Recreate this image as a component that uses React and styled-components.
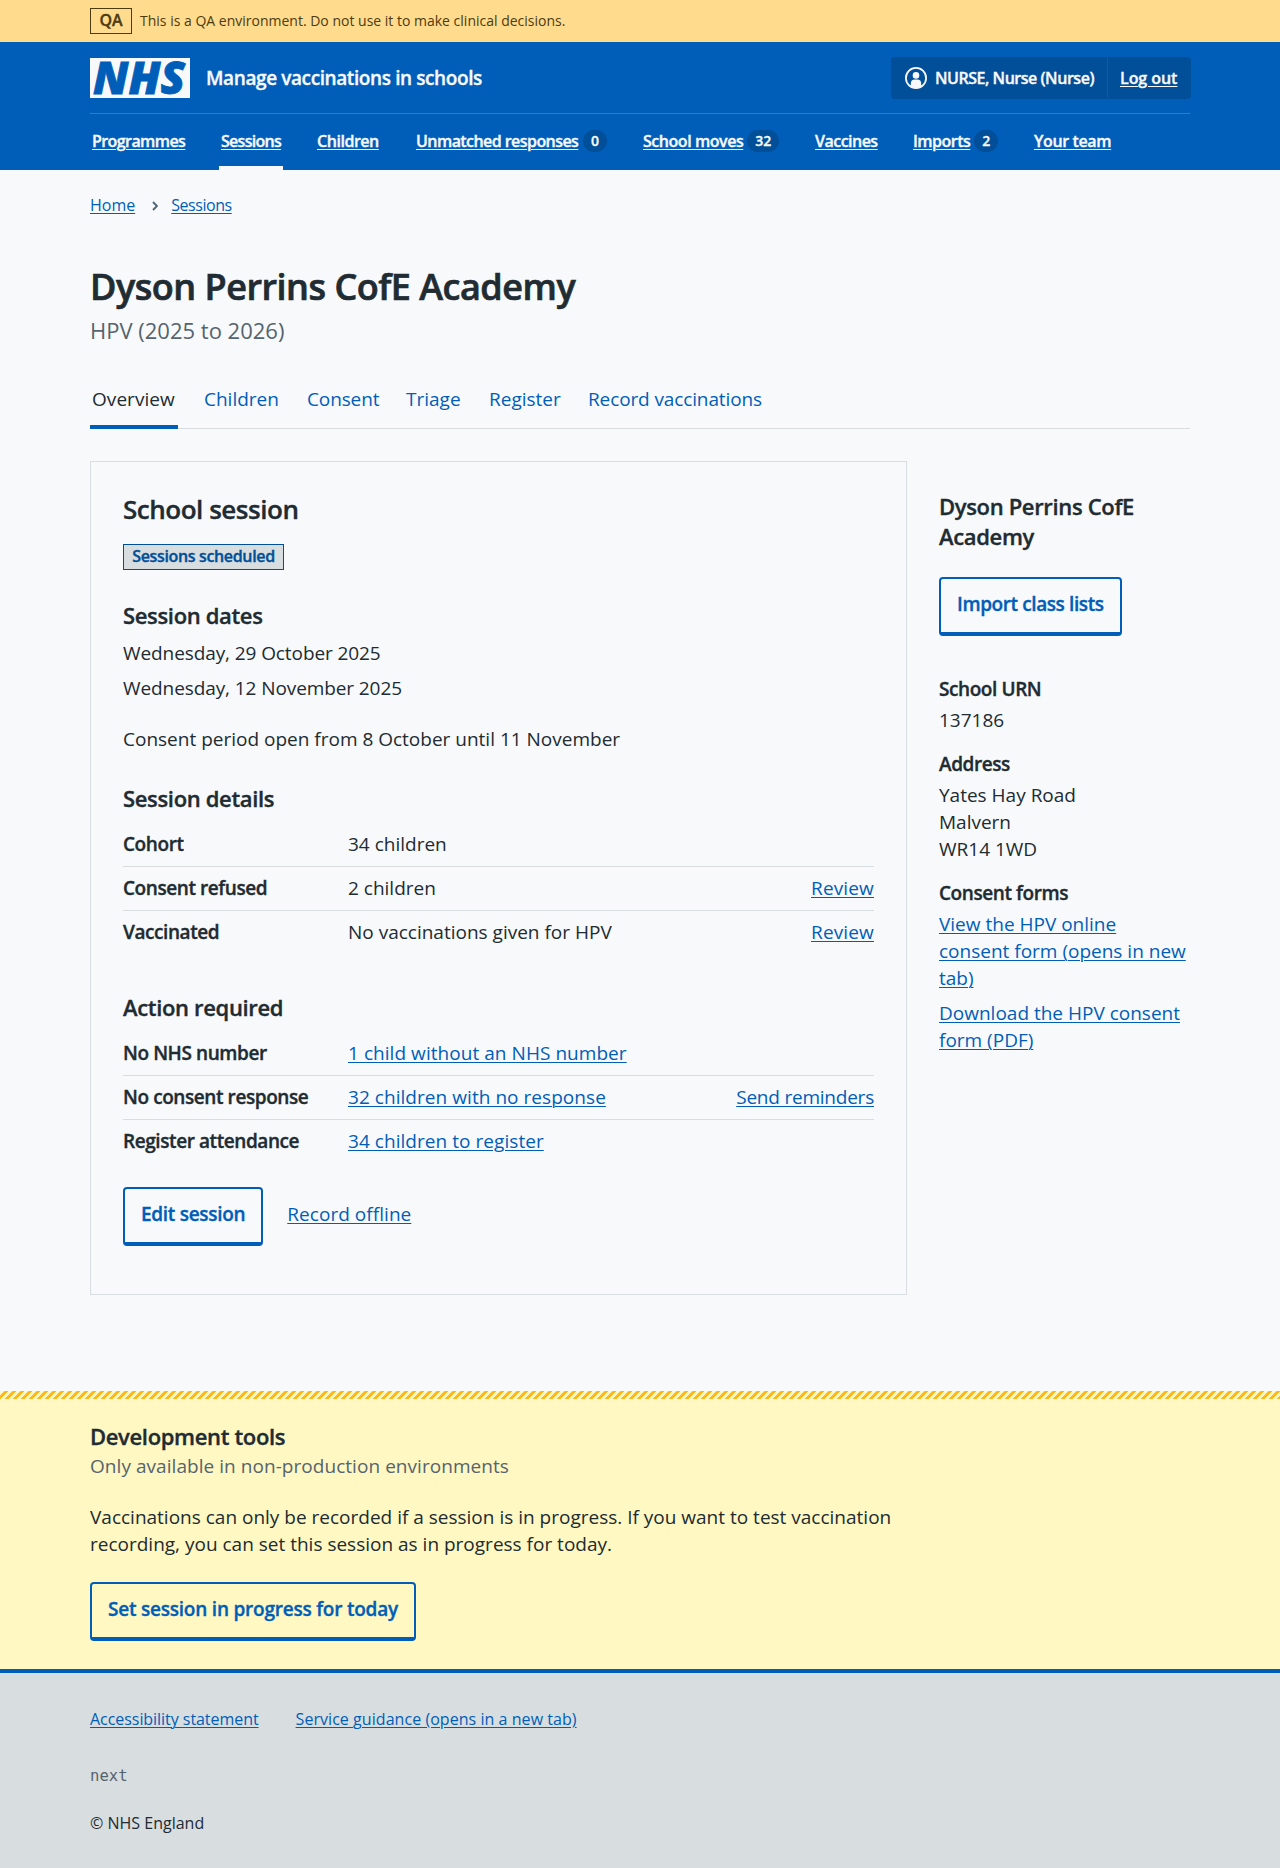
import React from "react";
import styled, { createGlobalStyle, css } from "styled-components";

const color = {
  blue: "#005eb8",
  darkBlue: "#004f98",
  page: "#f8f9fb",
  text: "#212b32",
  secondary: "#56646e",
  line: "#d8dde0",
};

const Global = createGlobalStyle`
  * { box-sizing: border-box; }
  body {
    margin: 0;
    background: ${color.line};
    color: ${color.text};
    font: 400 19px/27px "Open Sans", "Noto Sans", sans-serif;
  }
  h1, h2, h3, p, ul, dl, dd { margin: 0; padding: 0; }
  ul { list-style: none; }
`;

const semibold = css`
  font-weight: 600;
  -webkit-text-stroke: 0.35px currentColor;
`;

const Container = styled.div`
  width: 1100px;
  margin: 0 auto;
`;

const Link = styled.a`
  color: ${color.blue};
  letter-spacing: ${(p) => p.$spacing || 0}px;
  text-decoration: underline;
  text-decoration-thickness: 1.4px;
  text-underline-offset: 2px;
`;

/* Environment banner */
const Banner = styled.div`
  height: 42px;
  background: #ffdb8d;
  color: #4d3c10;
  font-size: 14px;
`;
const BannerRow = styled(Container)`
  display: flex;
  align-items: center;
  gap: 8px;
  height: 42px;
`;
const BannerText = styled.span`
  padding-bottom: 1px;
`;
const EnvTag = styled.strong`
  ${semibold}
  width: 42px;
  height: 26px;
  border: 1px solid #4d3c10;
  font-size: 16px;
  line-height: 23px;
  text-align: center;
`;

/* Header */
const Header = styled.header`
  height: 128px;
  background: ${color.blue};
  color: ${color.page};
`;
const HeaderTop = styled(Container)`
  display: flex;
  align-items: center;
  height: 72px;
  border-bottom: 1px solid #2f7ac5;
`;
const ServiceName = styled.span`
  ${semibold}
  margin-left: 16px;
  padding-top: 1px;
  letter-spacing: -0.4px;
`;
const Account = styled.div`
  ${semibold}
  display: flex;
  width: 300px;
  height: 42px;
  margin: 0 -1px 0 auto;
  padding: 1px 0;
  border-radius: 4px;
  background: ${color.darkBlue};
  font-size: 16px;
  line-height: 40px;
`;
const AccountUser = styled.span`
  display: flex;
  align-items: center;
  gap: 8px;
  width: 217px;
  padding-left: 14px;
  border-right: 1px solid ${color.blue};
  letter-spacing: -0.47px;
`;
const AccountLink = styled.a`
  margin-left: 12px;
  letter-spacing: -0.05px;
  text-decoration: underline;
  text-decoration-thickness: 1px;
  text-underline-offset: 2px;
`;
const Nav = styled(Container)`
  display: flex;
  gap: 32px;
  height: 56px;
`;
const NavItem = styled.a`
  ${semibold}
  display: flex;
  align-items: center;
  gap: 4px;
  flex: none;
  width: ${(p) => p.$width}px;
  padding: 0 2px 2px;
  font-size: 16px;
  line-height: 24px;
  letter-spacing: ${(p) => p.$spacing}px;
  white-space: nowrap;
  ${(p) => p.$active && css`box-shadow: inset 0 -4px ${color.page};`}
`;
const NavText = styled.span`
  text-decoration: underline;
  text-decoration-thickness: 1px;
  text-underline-offset: 2px;
`;
const Count = styled.span`
  min-width: 24px;
  height: 22px;
  margin-left: auto;
  padding: 0 8px;
  border-radius: 11px;
  background: ${color.darkBlue};
  font-size: 14px;
  line-height: 22px;
  letter-spacing: 0;
  text-align: center;
`;

/* Page heading */
const Main = styled.main`
  height: 1221px;
  padding-top: 23px;
  background: ${color.page};
`;
const Breadcrumb = styled.nav`
  display: flex;
  align-items: center;
  height: 24px;
  font-size: 16px;
  line-height: 24px;
`;
const Chevron = styled.svg`
  margin: 1px 13px 0 17px;
`;
const Title = styled.h1`
  ${semibold}
  -webkit-text-stroke-width: 0.7px;
  margin-top: 48px;
  font-size: 36px;
  line-height: 44px;
  letter-spacing: -0.48px;
`;
const Caption = styled.p`
  margin-top: 6px;
  color: ${color.secondary};
  font-size: 22px;
  line-height: 30px;
`;
const Tabs = styled.nav`
  display: flex;
  gap: 24px;
  height: 44px;
  margin-top: 40px;
  box-shadow: inset 0 -1px ${color.line};
`;
const Tab = styled.a`
  width: ${(p) => p.$width}px;
  padding: 1px 2px 0;
  letter-spacing: ${(p) => p.$spacing || 0}px;
  white-space: nowrap;
  color: ${(p) => (p.$active ? color.text : color.blue)};
  ${(p) => p.$active && css`box-shadow: inset 0 -4px ${color.blue};`}
`;

/* Columns */
const Columns = styled.div`
  display: grid;
  grid-template-columns: 817px 251px;
  gap: 32px;
  align-items: start;
  margin-top: 32px;
`;
const Card = styled.section`
  height: 834px;
  padding: 32px;
  border: 1px solid ${color.line};
`;
const CardTitle = styled.h2`
  ${semibold}
  font-size: 26px;
  line-height: 30px;
  letter-spacing: -0.47px;
`;
const Status = styled.strong`
  ${semibold}
  display: block;
  width: 161px;
  height: 26px;
  margin-top: 20px;
  border: 1px solid ${color.darkBlue};
  background: ${color.line};
  color: ${color.darkBlue};
  font-size: 16px;
  line-height: 23px;
  letter-spacing: -0.35px;
  text-align: center;
`;
const Heading = styled.h3`
  ${semibold}
  margin-top: ${(p) => p.$top}px;
  font-size: 22px;
  line-height: 30px;
  letter-spacing: -0.34px;
`;
const Dates = styled.ul`
  display: grid;
  gap: 8px;
  margin-top: 10px;
  letter-spacing: -0.09px;
`;
const Paragraph = styled.p`
  margin-top: 24px;
  max-width: 817px;
`;
const Summary = styled.dl`
  margin-top: 10px;
`;
const SummaryRow = styled.div`
  display: grid;
  grid-template-columns: 225px 1fr auto;
  height: 44px;
  padding-top: 8px;
  border-bottom: 1px solid ${color.line};
  &:last-child { border-color: transparent; }
`;
const Key = styled.dt`
  ${semibold}
  letter-spacing: -0.42px;
`;
const Actions = styled.div`
  display: flex;
  align-items: flex-start;
  gap: 24px;
  margin-top: 23px;
  > a { padding-top: 14px; }
`;
const Button = styled.button`
  display: block;
  height: 59px;
  margin-top: ${(p) => p.$top || 0}px;
  padding: 12px 16px 14px;
  border: 2px solid ${color.blue};
  border-bottom-width: 4px;
  border-radius: 4px;
  background: transparent;
  color: ${color.blue};
  font: inherit;
  ${semibold}
  letter-spacing: ${(p) => p.$spacing || -0.22}px;
  white-space: nowrap;
`;

/* School details */
const Details = styled.dl`
  display: grid;
  gap: 17px;
  margin-top: 40px;
`;
const Detail = styled.div`
  display: grid;
  gap: 4px;
`;
const LinkList = styled.ul`
  display: grid;
  gap: 8px;
`;

/* Development tools */
const DevTools = styled.section`
  height: 278px;
  background: #fff8c2;
`;
const Stripe = styled.div`
  height: 8px;
  background: linear-gradient(
      135deg,
      transparent 25%,
      #ffb81c 25% 50%,
      transparent 50% 75%,
      #ffb81c 75%
    )
    0 0 / 8px 8px;
`;
const DevCaption = styled.p`
  margin-top: 2px;
  color: ${color.secondary};
  letter-spacing: 0.05px;
`;

/* Footer */
const Footer = styled.footer`
  height: 199px;
  padding-top: 34px;
  border-top: 4px solid ${color.blue};
  background: ${color.line};
  font-size: 16px;
  line-height: 24px;
`;
const FooterLinks = styled.div`
  display: flex;
  gap: 37px;
`;
const Version = styled.p`
  margin-top: 33px;
  color: ${color.secondary};
  font: 15.6px/24px "DejaVu Sans Mono", monospace;
`;
const Copyright = styled.p`
  margin-top: 23px;
`;

const LogoSvg = styled.svg`
  flex: none;
  overflow: visible;
`;
const LogoText = styled.text`
  fill: ${color.blue};
  stroke: ${color.blue};
  stroke-width: 0.8px;
  font: italic 800 45px "Open Sans", sans-serif;
`;

const Logo = () => (
  <LogoSvg width="100" height="40" viewBox="0 0 100 40" role="img" aria-label="NHS">
    <rect width="100" height="40" fill={color.page} />
    <LogoText x="3" y="36" textLength="92" lengthAdjust="spacingAndGlyphs">NHS</LogoText>
  </LogoSvg>
);

const UserIcon = () => (
  <svg width="22" height="22" viewBox="0 0 22 22" aria-hidden="true">
    <circle cx="11" cy="11" r="10.1" fill="none" stroke={color.page} strokeWidth="1.8" />
    <circle cx="11" cy="8.4" r="3.3" fill={color.page} />
    <path
      d="M5.8 19.5v-2.9a4 4 0 0 1 4-4h2.4a4 4 0 0 1 4 4v2.9a10 10 0 0 1-10.4 0z"
      fill={color.page}
    />
  </svg>
);

const navigation = [
  { label: "Programmes", width: 97, spacing: -0.58 },
  { label: "Sessions", width: 64, spacing: -0.72, active: true },
  { label: "Children", width: 67, spacing: -0.46 },
  { label: "Unmatched responses", width: 195, spacing: -0.56, count: 0 },
  { label: "School moves", width: 140, spacing: -0.45, count: 32 },
  { label: "Vaccines", width: 66, spacing: -0.52 },
  { label: "Imports", width: 89, spacing: -0.52, count: 2 },
  { label: "Your team", width: 82, spacing: -0.38 },
];
const tabs = [
  { label: "Overview", width: 88, spacing: 0.06, active: true },
  { label: "Children", width: 79 },
  { label: "Consent", width: 75, spacing: -0.12 },
  { label: "Triage", width: 59 },
  { label: "Register", width: 75 },
  { label: "Record vaccinations", width: 178, spacing: -0.12 },
];
const sessionDetails = [
  { key: "Cohort", value: "34 children" },
  { key: "Consent refused", value: "2 children", action: "Review", spacing: 0.15 },
  { key: "Vaccinated", value: "No vaccinations given for HPV", action: "Review", spacing: 0.15 },
];
const requiredActions = [
  { key: "No NHS number", link: "1 child without an NHS number" },
  {
    key: "No consent response",
    link: "32 children with no response",
    action: "Send reminders",
    spacing: -0.22,
  },
  { key: "Register attendance", link: "34 children to register" },
];

const SummaryList = ({ rows }) => (
  <Summary>
    {rows.map((row) => (
      <SummaryRow key={row.key}>
        <Key>{row.key}</Key>
        <dd>{row.link ? <Link $spacing={0.05}>{row.link}</Link> : row.value}</dd>
        <dd>{row.action && <Link $spacing={row.spacing}>{row.action}</Link>}</dd>
      </SummaryRow>
    ))}
  </Summary>
);

export default function App() {
  return (
    <>
      <Global />
      <Banner>
        <BannerRow>
          <EnvTag>QA</EnvTag>
          <BannerText>
            This is a QA environment. Do not use it to make clinical decisions.
          </BannerText>
        </BannerRow>
      </Banner>
      <Header>
        <HeaderTop>
          <Logo />
          <ServiceName>Manage vaccinations in schools</ServiceName>
          <Account>
            <AccountUser>
              <UserIcon />
              NURSE, Nurse (Nurse)
            </AccountUser>
            <AccountLink>Log out</AccountLink>
          </Account>
        </HeaderTop>
        <Nav as="nav">
          {navigation.map((item) => (
            <NavItem
              key={item.label}
              $width={item.width}
              $spacing={item.spacing}
              $active={item.active}
            >
              <NavText>{item.label}</NavText>
              {item.count !== undefined && <Count>{item.count}</Count>}
            </NavItem>
          ))}
        </Nav>
      </Header>
      <Main>
        <Container>
          <Breadcrumb>
            <Link>Home</Link>
            <Chevron width="6" height="10" viewBox="0 0 6 10">
              <path d="M1 1l4 4-4 4" fill="none" stroke="#4c6272" strokeWidth="1.8" />
            </Chevron>
            <Link $spacing={-0.45}>Sessions</Link>
          </Breadcrumb>
          <Title>Dyson Perrins CofE Academy</Title>
          <Caption>HPV (2025 to 2026)</Caption>
          <Tabs>
            {tabs.map((tab) => (
              <Tab
                key={tab.label}
                $width={tab.width}
                $spacing={tab.spacing}
                $active={tab.active}
              >
                {tab.label}
              </Tab>
            ))}
          </Tabs>
          <Columns>
            <Card>
              <CardTitle>School session</CardTitle>
              <Status>Sessions scheduled</Status>
              <Heading $top={30}>Session dates</Heading>
              <Dates>
                <li>Wednesday, 29 October 2025</li>
                <li>Wednesday, 12 November 2025</li>
              </Dates>
              <Paragraph>Consent period open from 8 October until 11 November</Paragraph>
              <Heading $top={30}>Session details</Heading>
              <SummaryList rows={sessionDetails} />
              <Heading $top={37}>Action required</Heading>
              <SummaryList rows={requiredActions} />
              <Actions>
                <Button $spacing={-0.3}>Edit session</Button>
                <Link $spacing={0.05}>Record offline</Link>
              </Actions>
            </Card>
            <aside>
              <Heading $top={30}>Dyson Perrins CofE Academy</Heading>
              <Button $top={26} $spacing={-0.4}>Import class lists</Button>
              <Details>
                <Detail>
                  <Key>School URN</Key>
                  <dd>137186</dd>
                </Detail>
                <Detail>
                  <Key>Address</Key>
                  <dd>
                    Yates Hay Road
                    <br />
                    Malvern
                    <br />
                    WR14 1WD
                  </dd>
                </Detail>
                <Detail>
                  <Key>Consent forms</Key>
                  <dd>
                    <LinkList>
                      <li><Link>View the HPV online consent form (opens in new tab)</Link></li>
                      <li><Link>Download the HPV consent form (PDF)</Link></li>
                    </LinkList>
                  </dd>
                </Detail>
              </Details>
            </aside>
          </Columns>
        </Container>
      </Main>
      <DevTools>
        <Stripe />
        <Container>
          <Heading $top={22}>Development tools</Heading>
          <DevCaption>Only available in non-production environments</DevCaption>
          <Paragraph>
            Vaccinations can only be recorded if a session is in progress. If you want to test
            vaccination recording, you can set this session as in progress for today.
          </Paragraph>
          <Button $top={24}>Set session in progress for today</Button>
        </Container>
      </DevTools>
      <Footer>
        <Container>
          <FooterLinks>
            <Link $spacing={-0.05}>Accessibility statement</Link>
            <Link $spacing={0.05}>Service guidance (opens in a new tab)</Link>
          </FooterLinks>
          <Version>next</Version>
          <Copyright>© NHS England</Copyright>
        </Container>
      </Footer>
    </>
  );
}
